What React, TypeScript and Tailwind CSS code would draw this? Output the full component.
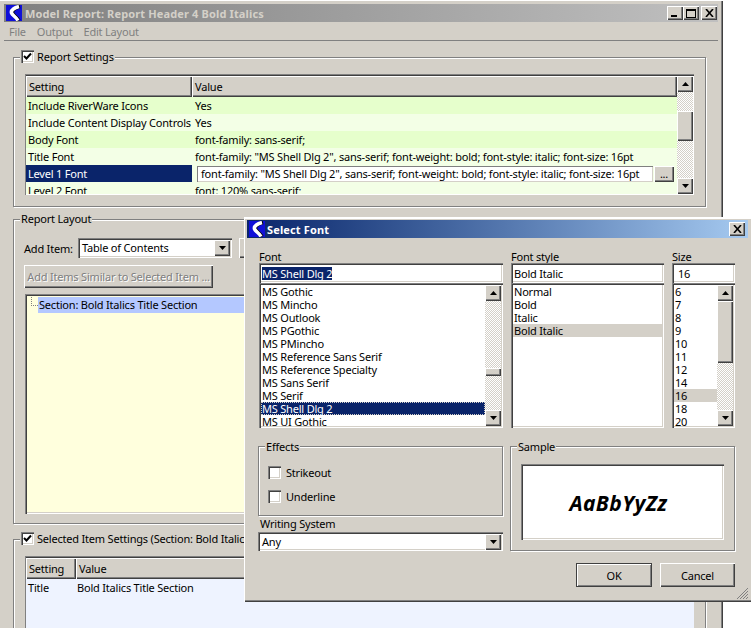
import React from 'react'

const raised = 'shadow-[inset_1px_1px_0_#fff,inset_-1px_-1px_0_#404040,inset_-2px_-2px_0_#808080]'
const sunken = 'shadow-[inset_1px_1px_0_#808080,inset_2px_2px_0_#404040,inset_-1px_-1px_0_#fff,inset_-2px_-2px_0_#d4d0c8]'
const dither = 'bg-[repeating-conic-gradient(#d4d0c8_0_25%,#fff_0_50%)] bg-[length:2px_2px]'

const AppIcon = () => (
  <svg width="16" height="16" viewBox="0 0 16 16" className="shrink-0">
    <rect width="16" height="16" fill="#1010d8" />
    <path d="M14 1.5 C10 2.5 5.5 5 6.5 8 C7.5 10.5 11 12 13 15.5" stroke="#000" strokeWidth="3.5" fill="none" />
    <path d="M13 1.5 C9 2.5 4.5 5 5.5 8 C6.5 10.5 10 12 12 15.5" stroke="#fff" strokeWidth="3.5" fill="none" />
  </svg>
)

const Arrow = ({ dir }: { dir: 'up' | 'down' }) => (
  <svg width="7" height="4" viewBox="0 0 7 4">
    <polygon points={dir === 'up' ? '3.5,0 7,4 0,4' : '0,0 7,0 3.5,4'} fill="#000" />
  </svg>
)

const ArrowButton = ({ dir }: { dir: 'up' | 'down' }) => (
  <div className={`w-[16px] h-[16px] shrink-0 flex items-center justify-center bg-[#d4d0c8] ${raised}`}>
    <Arrow dir={dir} />
  </div>
)

const Scrollbar = ({ thumb }: { thumb: string }) => (
  <div className="w-[16px] shrink-0 flex flex-col h-full">
    <ArrowButton dir="up" />
    <div className={`flex-1 min-h-0 overflow-hidden ${dither}`}>
      <div className={`bg-[#d4d0c8] ${raised} ${thumb}`} />
    </div>
    <ArrowButton dir="down" />
  </div>
)

const Checkbox = ({ checked }: { checked?: boolean }) => (
  <div className={`w-[13px] h-[13px] shrink-0 bg-white flex items-center justify-center ${sunken}`}>
    {checked && (
      <svg width="9" height="9" viewBox="0 0 9 9">
        <path d="M1 4 L3.5 6.5 L8 1.5" stroke="#000" strokeWidth="2" fill="none" />
      </svg>
    )}
  </div>
)

const Group = ({
  legend,
  className,
  children,
}: {
  legend: React.ReactNode
  className: string
  children: React.ReactNode
}) => (
  <div className={`relative border border-[#808080] shadow-[1px_1px_0_#fff,inset_1px_1px_0_#fff] ${className}`}>
    <div className="absolute left-[6px] top-[-8px] h-[13px] flex items-center gap-[3px] px-px bg-[#d4d0c8]">
      {legend}
    </div>
    {children}
  </div>
)

const HeaderCell = ({ className, children }: { className: string; children: React.ReactNode }) => (
  <div className={`h-[21px] flex items-center pl-[3px] bg-[#d4d0c8] ${raised} ${className}`}>{children}</div>
)

const Combo = ({ label, className }: { label: string; className: string }) => (
  <div className={`p-[2px] bg-white flex items-center ${sunken} ${className}`}>
    <div className="flex-1 pl-[2px] pb-px">{label}</div>
    <ArrowButton dir="down" />
  </div>
)

const settings = [
  ['Include RiverWare Icons', 'Yes'],
  ['Include Content Display Controls', 'Yes'],
  ['Body Font', 'font-family: sans-serif;'],
  ['Title Font', 'font-family: "MS Shell Dlg 2", sans-serif; font-weight: bold; font-style: italic; font-size: 16pt'],
]

const fonts = [
  'MS Gothic',
  'MS Mincho',
  'MS Outlook',
  'MS PGothic',
  'MS PMincho',
  'MS Reference Sans Serif',
  'MS Reference Specialty',
  'MS Sans Serif',
  'MS Serif',
  'MS Shell Dlg 2',
  'MS UI Gothic',
]

const MainWindow = () => (
  <div className="w-[723px] h-[628px] overflow-hidden pt-[4px] pl-[4px] pr-[5px] bg-[#d4d0c8] shadow-[inset_0_1px_0_#fff,inset_-1px_0_0_#404040,inset_-2px_0_0_#808080]">
    {/* title */}
    <div className="h-[18px] flex items-center pl-[2px] pr-[1px] bg-gradient-to-r from-[#808080] to-[#c0c0c0]">
      <AppIcon />
      <div className="ml-[3px] font-bold tracking-[0.14px] text-[#d4d0c8] flex-1">Model Report: Report Header 4 Bold Italics</div>
      <div className={`w-[16px] h-[14px] bg-[#d4d0c8] flex items-end pl-[4px] pb-[3px] ${raised}`}>
        <div className="w-[6px] h-[2px] bg-black" />
      </div>
      <div className={`w-[16px] h-[14px] bg-[#d4d0c8] flex items-center justify-center ${raised}`}>
        <div className="w-[10px] h-[9px] border border-black border-t-2" />
      </div>
      <div className={`ml-[2px] w-[16px] h-[14px] bg-[#d4d0c8] flex items-center justify-center ${raised}`}>
        <svg width="9" height="8" viewBox="0 0 9 8">
          <path d="M1 0 L8 8 M8 0 L1 8" stroke="#000" strokeWidth="1.6" />
        </svg>
      </div>
    </div>

    {/* menu */}
    <div className="h-[19px] flex items-center gap-[11px] pl-[5px] text-[#808080] border-b border-[#808080]">
      <span>File</span>
      <span>Output</span>
      <span>Edit Layout</span>
    </div>

    <div className="pl-[9px] pr-[12px]">
      {/* report settings */}
      <Group
        className="mt-[16px] h-[150px] pt-[16px] px-[11px]"
        legend={
          <>
            <Checkbox checked />
            <span>Report Settings</span>
          </>
        }
      >
        <div className="h-[121px] w-[669px] flex pt-[2px] pl-px pr-[1px] pb-px bg-[#f3ffe6] shadow-[inset_1px_1px_0_#808080,inset_0_2px_0_#404040,inset_-1px_-1px_0_#fff]">
          <div className="flex-1 min-w-0 overflow-hidden">
            <div className="flex">
              <HeaderCell className="w-[166px]">Setting</HeaderCell>
              <HeaderCell className="flex-1">Value</HeaderCell>
            </div>
            {settings.map(([k, v], i) => (
              <div key={k} className={`h-[17px] flex items-center ${i % 2 === 0 ? 'bg-[#e6ffcc]' : 'bg-[#f3ffe6]'}`}>
                <div className="w-[166px] pl-[2px] shrink-0">{k}</div>
                <div className="pl-[3px] whitespace-nowrap">{v}</div>
              </div>
            ))}
            <div className="h-[17px] flex items-center bg-[#f3ffe6]">
              <div className="w-[166px] h-full pl-[2px] shrink-0 flex items-center bg-[#0a246a] text-white">Level 1 Font</div>
              <div className="ml-[5px] w-[456px] h-[16px] flex items-center pl-[4px] bg-white whitespace-nowrap shadow-[inset_1px_1px_0_#808080,inset_-1px_-1px_0_#d4d0c8]">
                font-family: "MS Shell Dlg 2", sans-serif; font-weight: bold; font-style: italic; font-size: 16pt
              </div>
              <div className={`ml-px w-[20px] h-[16px] flex items-center justify-center bg-[#d4d0c8] ${raised}`}>...</div>
            </div>
            <div className="h-[12px] overflow-hidden flex items-start bg-[#f3ffe6]">
              <div className="w-[166px] pl-[2px] shrink-0 pt-[2px]">Level 2 Font</div>
              <div className="pl-[3px] pt-[2px]">font: 120% sans-serif;</div>
            </div>
          </div>
          <Scrollbar thumb="mt-[19px] h-[30px]" />
        </div>
      </Group>

      {/* report layout */}
      <Group className="mt-[12px] h-[305px] pt-[18px] px-[11px]" legend={<span>Report Layout</span>}>
        <div className="flex items-center h-[20px]">
          <span className="-ml-px w-[54px]">Add Item:</span>
          <Combo label="Table of Contents" className="w-[154px] h-[20px]" />
          <div className={`ml-[7px] w-[60px] h-[20px] bg-[#d4d0c8] ${raised}`} />
        </div>
        <div className={`-ml-px mt-[7px] w-[189px] h-[23px] flex items-center justify-center whitespace-nowrap bg-[#d4d0c8] text-[#808080] [text-shadow:1px_1px_0_#fff] ${raised}`}>
          Add Items Similar to Selected Item ...
        </div>
        <div className={`mt-[6px] w-[669px] h-[220px] pt-[3px] pl-[2px] bg-[#ffffdd] ${sunken}`}>
          <div className="flex h-[16px]">
            <div className="ml-[4px] w-[7px] h-[9px] border-l border-b border-dotted border-[#808080]" />
            <div className="flex-1 flex items-center pl-px pb-px bg-[#b4c8ff]">Section: Bold Italics Title Section</div>
          </div>
        </div>
      </Group>

      {/* selected item */}
      <Group
        className="mt-[15px] h-[120px] pt-[16px] px-[11px]"
        legend={
          <>
            <Checkbox checked />
            <span className="whitespace-nowrap">Selected Item Settings (Section: Bold Italics Title Section)</span>
          </>
        }
      >
        <div className="h-[100px] w-[669px] pt-[2px] pl-px bg-[#eef3ff] shadow-[inset_1px_1px_0_#808080,inset_0_2px_0_#404040]">
          <div className="flex">
            <HeaderCell className="w-[50px]">Setting</HeaderCell>
            <HeaderCell className="flex-1">Value</HeaderCell>
          </div>
          <div className="h-[17px] flex items-center">
            <div className="w-[50px] pl-[2px]">Title</div>
            <div className="pl-px">Bold Italics Title Section</div>
          </div>
        </div>
      </Group>
    </div>
  </div>
)

const FontDialog = () => (
  <div className="absolute left-[244px] top-[217px] w-[507px] h-[385px] p-[3px] bg-[#d4d0c8] shadow-[inset_1px_1px_0_#fff,inset_0_-1px_0_#404040,inset_0_-2px_0_#808080,inset_0_2px_0_#fff]">
    <div className="h-[18px] flex items-center pl-[2px] pr-[3px] bg-gradient-to-r from-[#0a246a] to-[#a6caf0]">
      <AppIcon />
      <div className="ml-[2px] flex-1 font-bold tracking-[0.14px] text-white">Select Font</div>
      <div className={`w-[16px] h-[14px] bg-[#d4d0c8] flex items-center justify-center ${raised}`}>
        <svg width="9" height="8" viewBox="0 0 9 8">
          <path d="M1 0 L8 8 M8 0 L1 8" stroke="#000" strokeWidth="1.6" />
        </svg>
      </div>
    </div>

    <div className="pl-[12px] pt-[12px]">
      <div className="grid grid-cols-[244px_153px_63px] gap-x-[8px]">
        <div className="h-[13px] leading-[13px]">Font</div>
        <div className="h-[13px] leading-[13px]">Font style</div>
        <div className="h-[13px] leading-[13px]">Size</div>

        <div className={`h-[20px] flex items-center pl-[3px] bg-white ${sunken}`}>
          <span className="bg-[#0a246a] text-white">MS Shell Dlg 2</span>
        </div>
        <div className={`h-[20px] flex items-center pl-[3px] bg-white ${sunken}`}>Bold Italic</div>
        <div className={`h-[20px] flex items-center pl-[6px] bg-white ${sunken}`}>16</div>

        <div className={`h-[145px] flex p-[2px] bg-white overflow-hidden ${sunken}`}>
          <div className="flex-1 min-w-0">
            {fonts.map((f) => (
              <div
                key={f}
                className={`h-[13px] leading-[13px] pl-[1px] whitespace-nowrap ${
                  f === 'MS Shell Dlg 2' ? 'bg-[#0a246a] text-white outline-1 outline-dotted outline-offset-[-1px] outline-[#d4d0c8]' : ''
                }`}
              >
                {f}
              </div>
            ))}
          </div>
          <Scrollbar thumb="mt-[67px] h-[8px]" />
        </div>
        <div className={`h-[145px] p-[2px] bg-white ${sunken}`}>
          {['Normal', 'Bold', 'Italic', 'Bold Italic'].map((s) => (
            <div key={s} className={`h-[13px] leading-[13px] pl-px ${s === 'Bold Italic' ? 'bg-[#d4d0c8]' : ''}`}>
              {s}
            </div>
          ))}
        </div>
        <div className={`h-[145px] flex p-[2px] bg-white overflow-hidden ${sunken}`}>
          <div className="flex-1 min-w-0">
            {[6, 7, 8, 9, 10, 11, 12, 14, 16, 18, 20].map((n) => (
              <div key={n} className={`h-[13px] leading-[13px] pl-px ${n === 16 ? 'bg-[#d4d0c8]' : ''}`}>
                {n}
              </div>
            ))}
          </div>
          <Scrollbar thumb="h-[62px]" />
        </div>
      </div>

      <div className="mt-[18px] ml-[-1px] flex gap-[7px]">
        <div className="w-[245px]">
          <Group className="h-[70px] pt-[19px] pl-[9px]" legend={<span className="mt-[2px]">Effects</span>}>
            <div className="flex items-center gap-[5px] h-[13px]">
              <Checkbox />
              <span>Strikeout</span>
            </div>
            <div className="mt-[11px] flex items-center gap-[5px] h-[13px]">
              <Checkbox />
              <span>Underline</span>
            </div>
          </Group>
          <div className="h-[16px] pl-[2px] pb-px flex items-center">Writing System</div>
          <Combo label="Any" className="h-[19px]" />
        </div>
        <Group className="w-[225px] h-[105px] pt-[17px] pl-[10px]" legend={<span className="mt-[2px]">Sample</span>}>
          <div className={`w-[203px] h-[76px] pr-[8px] pt-[2px] flex items-center justify-center bg-white ${sunken}`}>
            <span className="font-['Liberation_Sans',sans-serif] font-bold italic text-[21px] leading-[24px] tracking-[0.4px] text-black">
              AaBbYyZz
            </span>
          </div>
        </Group>
      </div>

      <div className="mt-[12px] flex justify-end gap-[8px] pr-[13px]">
        <div className="w-[76px] h-[24px] flex items-center justify-center bg-[#d4d0c8] shadow-[inset_1px_1px_0_#404040,inset_-1px_-1px_0_#404040,inset_2px_2px_0_#fff,inset_-2px_-2px_0_#808080]">
          OK
        </div>
        <div className={`w-[75px] h-[24px] flex items-center justify-center bg-[#d4d0c8] ${raised}`}>Cancel</div>
      </div>
    </div>

    <svg width="13" height="13" viewBox="0 0 13 13" className="absolute right-[2px] bottom-[2px]">
      <path d="M12 1 L1 12 M12 4 L4 12 M12 7 L7 12 M12 10 L10 12" stroke="#808080" strokeWidth="1" />
    </svg>
  </div>
)

export default function App() {
  return (
    <div className="relative w-[751px] h-[628px] overflow-hidden bg-white text-black text-[11px] leading-[13px] tracking-[-0.2px] font-['Noto_Sans',sans-serif]">
      <MainWindow />
      <FontDialog />
    </div>
  )
}
